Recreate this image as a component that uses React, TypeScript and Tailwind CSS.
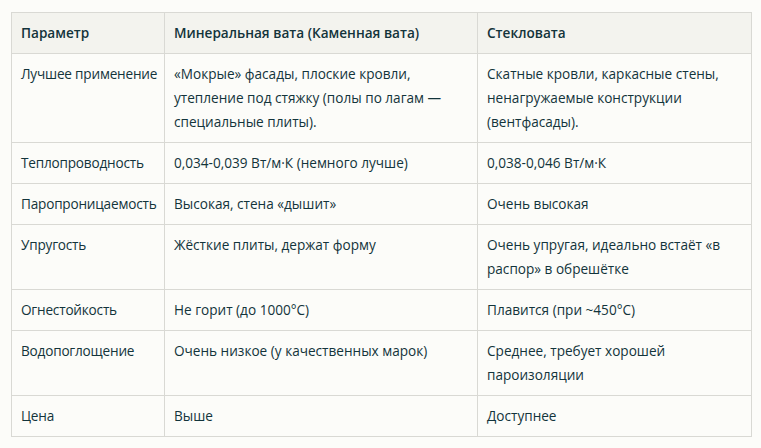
import React from "react";

const rows: [string, string, string][] = [
  [
    "Лучшее применение",
    "«Мокрые» фасады, плоские кровли, утепление под стяжку (полы по лагам — специальные плиты).",
    "Скатные кровли, каркасные стены, ненагружаемые конструкции (вентфасады).",
  ],
  ["Теплопроводность", "0,034-0,039 Вт/м·К (немного лучше)", "0,038-0,046 Вт/м·К"],
  ["Паропроницаемость", "Высокая, стена «дышит»", "Очень высокая"],
  ["Упругость", "Жёсткие плиты, держат форму", "Очень упругая, идеально встаёт «в распор» в обрешётке"],
  ["Огнестойкость", "Не горит (до 1000°C)", "Плавится (при ~450°C)"],
  ["Водопоглощение", "Очень низкое (у качественных марок)", "Среднее, требует хорошей пароизоляции"],
  ["Цена", "Выше", "Доступнее"],
];

export default function App() {
  return (
    <div
      className="w-[761px] h-[448px] bg-[#fcfcf9] pt-[12px] pl-[11px] text-[#13343b]"
      style={{ fontFamily: '"Open Sans", "Noto Sans", sans-serif' }}
    >
      <table className="w-[740px] border-collapse table-fixed text-[13.6px] leading-[24px]">
        <colgroup>
          <col className="w-[153px]" />
          <col className="w-[313px]" />
          <col className="w-[274px]" />
        </colgroup>
        <thead>
          <tr className="bg-[#f3f3ee]">
            {["Параметр", "Минеральная вата (Каменная вата)", "Стекловата"].map((h) => (
              <th
                key={h}
                className="border border-[#d9d9d4] pl-[9px] pr-[4px] py-[8px] text-left font-semibold align-top"
              >
                {h}
              </th>
            ))}
          </tr>
        </thead>
        <tbody>
          {rows.map((r) => (
            <tr key={r[0]}>
              {r.map((c, i) => (
                <td
                  key={i}
                  className={
                    i === 0
                      ? "border border-[#d9d9d4] pl-[9px] pr-[2px] py-[8px] align-top whitespace-nowrap tracking-[-0.2px]"
                      : "border border-[#d9d9d4] pl-[9px] pr-[4px] py-[8px] align-top"
                  }
                >
                  {c}
                </td>
              ))}
            </tr>
          ))}
        </tbody>
      </table>
    </div>
  );
}
